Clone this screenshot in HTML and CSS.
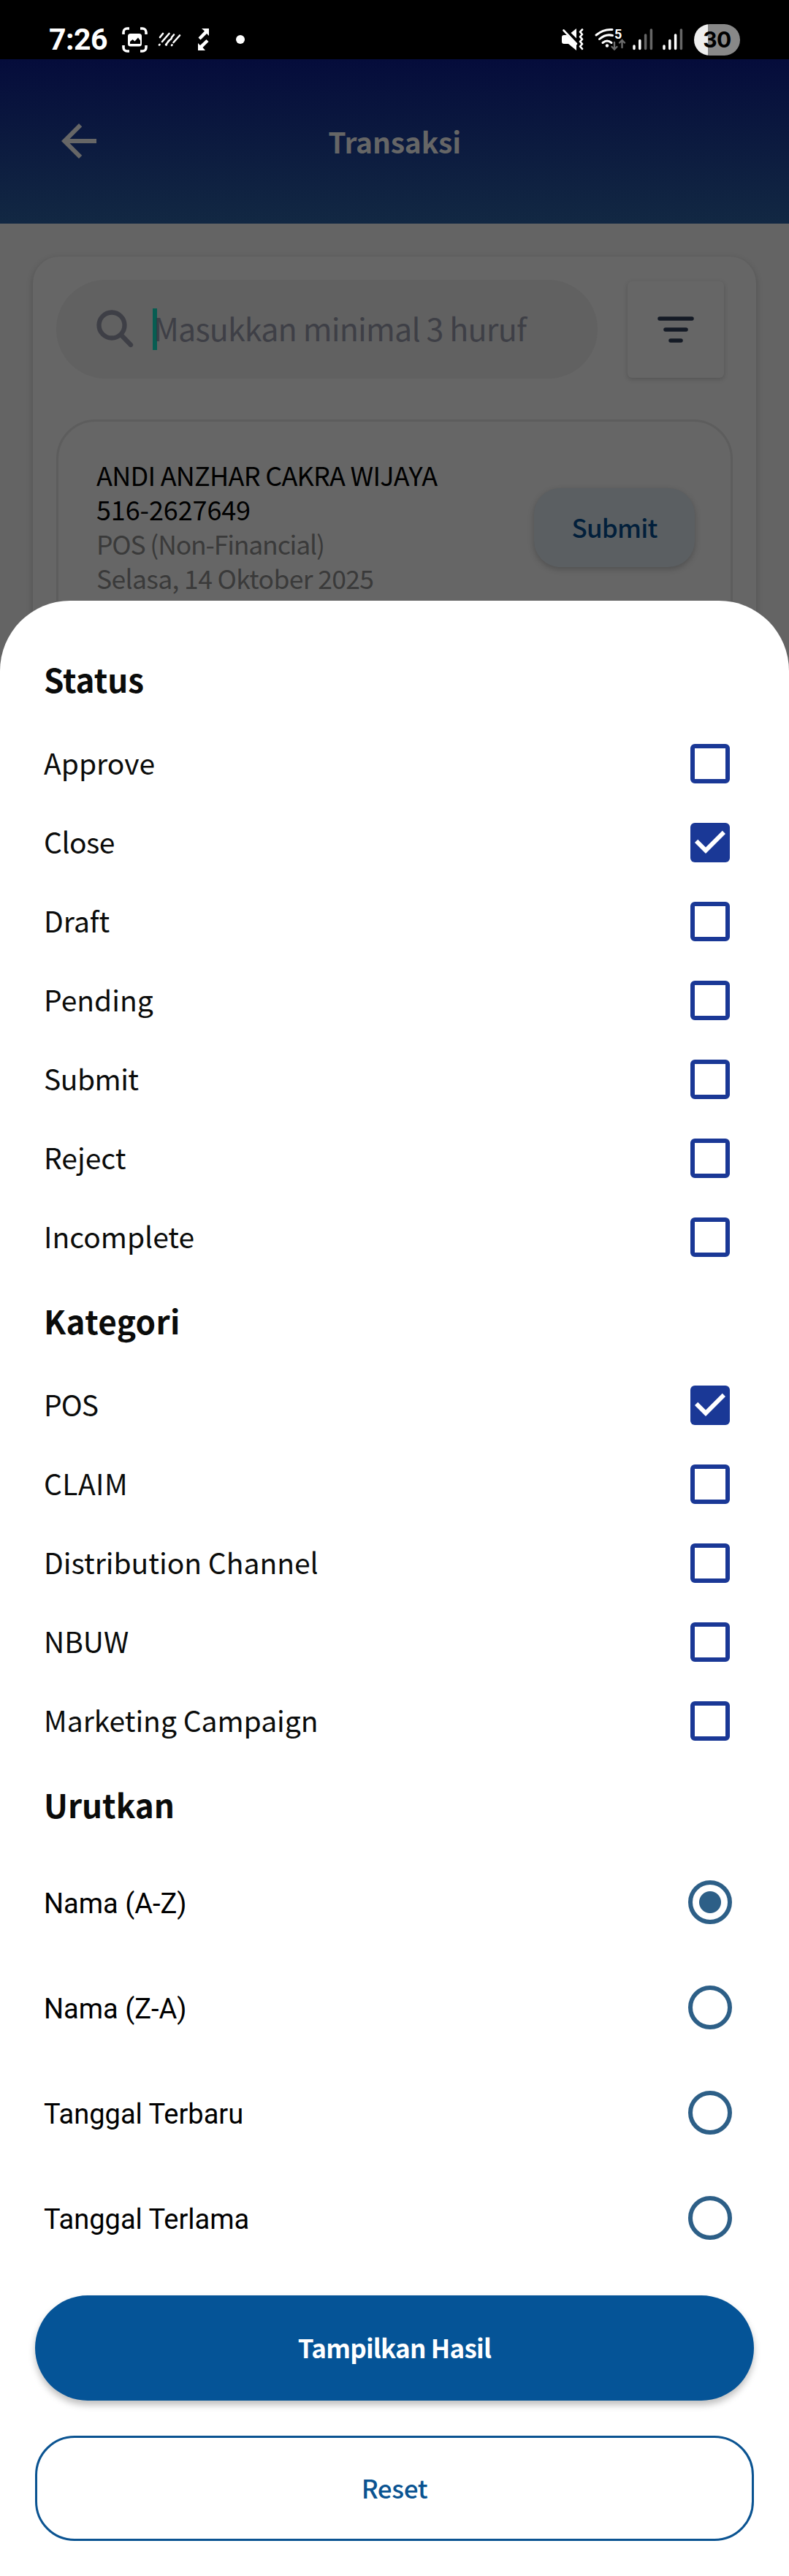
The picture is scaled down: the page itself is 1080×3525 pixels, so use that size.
FILE: index.html
```html
<!DOCTYPE html>
<html lang="id">
<head>
<meta charset="utf-8">
<title>Transaksi</title>
<link rel="stylesheet" href="styles.css">
</head>
<body>
<div class="app">
  <div class="statusbar">
    <div class="status-left">
      <span class="clock">7:26</span>
      <svg class="ic-shot" width="35" height="35" viewBox="0 0 35 35" fill="none" stroke="#fff" stroke-width="3.600"><path d="M2 10V7a5 5 0 0 1 5-5h3M25 2h3a5 5 0 0 1 5 5v3M33 25v3a5 5 0 0 1-5 5h-3M10 33H7a5 5 0 0 1-5-5v-3"/><rect x="8" y="9" width="19" height="17.500" rx="3.500" fill="#fff" stroke="none"/><path d="M11 23v-3l3.500-3 3 2.500 4.500-5 3 4v4.500z" fill="#000" stroke="none"/></svg>
      <svg class="ic-lines" width="32" height="20" viewBox="0 0 32 20" fill="none" stroke="#fff" stroke-width="2.600" stroke-linecap="round"><path d="M3 7l4-5M2 17.500l.5-.5M6 13L15.500 2M11 17l5-6M19 7l3-3.500M11.500 17.500l.5-.5M14 13l2-2M19 18l.5-.5M21.500 14L30 4.500M17.500 10L19 8"/></svg>
      <svg class="ic-arrows" width="15" height="30" viewBox="0 0 15 30" fill="#fff"><path d="M5 0h10v10l-3-3-8.500 8.500-3-3L9 3.500z"/><path d="M10 30H0V20l3 3 8.500-8 3 3-8 8z"/></svg>
      <span class="dot"></span>
    </div>
    <div class="status-right">
      <svg class="ic-mute" width="30" height="30" viewBox="0 0 30 30"><path d="M0 12q0-3 3-3h4l13 13v8L9 21H3q-3 0-3-3z" fill="#fff"/><path d="M12.500 6L20 0v13.500z" fill="#fff"/><path d="M2.500 2.500L20 21" stroke="#fff" stroke-width="2.600" stroke-linecap="round"/><path d="M28 1.500l-3 3.200 3 3.300-3 3.300 3 3.300-3 3.300 3 3.300-3 3.300 3 3.300" fill="none" stroke="#fff" stroke-width="2.600" stroke-linecap="round" stroke-linejoin="round"/></svg>
      <svg class="ic-wifi" width="43" height="32" viewBox="0 0 43 32" fill="none" stroke="#fff" stroke-width="3" stroke-linecap="round"><path d="M2 10Q12 1.500 24 2.500M6.500 15.500Q15 8 24.500 10.500M11 20.500q6-5 12 0"/><circle cx="17" cy="24.500" r="2.200" fill="#fff" stroke="none"/><path d="M27 20v9M23.500 26l3.500 3.500 3.500-3.500M37.500 27v-9M34 20.500l3.500-3.500 3.500 3.500" stroke="#6c6c6c" stroke-width="2.400"/><text x="27" y="15" class="wifi-gen">5</text></svg>
      <svg class="ic-sig" width="28" height="30" viewBox="0 0 28 30" stroke-width="3.500" stroke-linecap="round"><path d="M2 24v3.500M9.800 16.500v11" stroke="#fff"/><path d="M17.600 9v18.500M25.400 2v25.500" stroke="#666"/></svg>
      <svg class="ic-sig2" width="28" height="30" viewBox="0 0 28 30" stroke-width="3.500" stroke-linecap="round"><path d="M2 24v3.500M9.800 16.500v11M17.600 9v18.500" stroke="#fff"/><path d="M25.400 2v25.500" stroke="#666"/></svg>
      <span class="battery">30</span>
    </div>
  </div>
  <header class="header">
    <svg class="back" width="72" height="72" viewBox="0 0 24 24" fill="#666"><path d="M20 11H7.830l5.590-5.590L12 4l-8 8 8 8 1.410-1.410L7.830 13H20z"/></svg>
    <h1 class="title">Transaksi</h1>
  </header>
  <main class="content">
    <div class="card">
      <div class="tools">
        <div class="search">
          <svg width="54" height="56" viewBox="0 0 54 56" fill="none" stroke="#3e3f46" stroke-width="6.300" stroke-linecap="round"><circle cx="22" cy="22" r="17.500"/><path d="M35 35.500L48 49"/></svg>
          <span class="caret"></span>
          <span class="placeholder">Masukkan minimal 3 huruf</span>
        </div>
        <div class="filter"><svg width="50" height="36" viewBox="0 0 50 36" stroke="#141a25" stroke-width="5.500" stroke-linecap="round"><path d="M3 3h44M11 18h28M18 33h14"/></svg></div>
      </div>
      <div class="item">
        <div class="info">
          <div class="line name">ANDI ANZHAR CAKRA WIJAYA</div>
          <div class="line num">516-2627649</div>
          <div class="line muted kind">POS (Non-Financial)</div>
          <div class="line muted date">Selasa, 14 Oktober 2025</div>
        </div>
        <div class="badge">Submit</div>
      </div>
    </div>
  </main>
</div>
<section class="sheet">
  <h2 class="group first">Status</h2>
  <div class="row"><span class="label">Approve</span><span class="box"></span></div>
  <div class="row"><span class="label tight">Close</span><span class="box on"><svg width="54" height="54" viewBox="0 0 18 18" fill="#fff"><path d="M7 14L2 9l1.410-1.410L7 11.170l7.590-7.590L16 5z"/></svg></span></div>
  <div class="row"><span class="label">Draft</span><span class="box"></span></div>
  <div class="row"><span class="label">Pending</span><span class="box"></span></div>
  <div class="row"><span class="label tight">Submit</span><span class="box"></span></div>
  <div class="row"><span class="label">Reject</span><span class="box"></span></div>
  <div class="row"><span class="label">Incomplete</span><span class="box"></span></div>
  <h2 class="group wide">Kategori</h2>
  <div class="row"><span class="label tighter">POS</span><span class="box on"><svg width="54" height="54" viewBox="0 0 18 18" fill="#fff"><path d="M7 14L2 9l1.410-1.410L7 11.170l7.590-7.590L16 5z"/></svg></span></div>
  <div class="row"><span class="label wide">CLAIM</span><span class="box"></span></div>
  <div class="row"><span class="label">Distribution Channel</span><span class="box"></span></div>
  <div class="row"><span class="label">NBUW</span><span class="box"></span></div>
  <div class="row"><span class="label">Marketing Campaign</span><span class="box"></span></div>
  <h2 class="group">Urutkan</h2>
  <div class="row sort"><span class="label">Nama (A-Z)</span><span class="radio on"></span></div>
  <div class="row sort"><span class="label">Nama (Z-A)</span><span class="radio"></span></div>
  <div class="row sort"><span class="label">Tanggal Terbaru</span><span class="radio"></span></div>
  <div class="row sort"><span class="label">Tanggal Terlama</span><span class="radio"></span></div>
  <div class="actions">
    <div class="btn primary">Tampilkan Hasil</div>
    <div class="btn outline">Reset</div>
  </div>
</section>
</body>
</html>
```
FILE: styles.css
```css
* { box-sizing: border-box; }
body { margin: 0; width: 1080px; background: #fff; font-family: "Noto Sans CJK SC", "Noto Sans", sans-serif; }
svg { display: block; flex: none; }
.app { height: 925px; overflow: hidden; background: #646464; }

.statusbar { height: 81px; background: #000; color: #fff; display: flex; justify-content: space-between; padding: 0 67px; }
.status-left, .status-right { display: flex; align-items: center; height: 81px; padding-top: 27px; }
.clock { font: 700 41px/54px Roboto, sans-serif; letter-spacing: -.5px; width: 100px; }
.ic-lines { margin-left: 14px; }
.ic-arrows { margin-left: 23px; }
.dot { width: 12px; height: 12px; border-radius: 50%; background: #fff; margin-left: 37px; }
.ic-wifi { margin-left: 15px; overflow: visible; }
.wifi-gen { font: 700 18px Roboto, sans-serif; fill: #fff; stroke: none; }
.ic-sig { margin-left: 9px; }
.ic-sig2 { margin-left: 13px; }
.battery { width: 63px; height: 43px; margin-left: 15px; border-radius: 22px; background: linear-gradient(90deg, #eee 19px, #888 19px); color: #000; font: 700 30px/42px Inter, sans-serif; letter-spacing: -.5px; text-align: center; }

.header { height: 225px; background: linear-gradient(#050c3b, #122843); display: grid; grid-template-columns: 72px 1fr 72px; padding: 76px 72px 0; }
.title { margin: 0; padding-top: 8px; text-align: center; color: #666; font-size: 39px; line-height: 56px; font-weight: 700; letter-spacing: -.2px; }

.content { padding: 45px 45px 0; }
.card { height: 700px; border-radius: 36px; background: #666; box-shadow: 0 3px 10px rgba(0,0,0,.2); padding: 32px 32px 0; }
.tools { display: flex; justify-content: space-between; padding-right: 12px; }
.search { width: 741px; height: 135px; border-radius: 68px; background: #616161; display: flex; align-items: center; padding-left: 54px; }
.caret { width: 6px; height: 57px; background: #075d52; margin-left: 24px; }
.placeholder { color: #3e3f46; font-size: 43px; line-height: 60px; letter-spacing: -.85px; margin-left: -5px; padding-bottom: 5px; }
.filter { width: 132px; height: 132px; margin-top: 2px; border-radius: 6px; background: #666; box-shadow: 0 2px 6px rgba(0,0,0,.18); display: flex; align-items: center; justify-content: center; }
.item { margin-top: 56px; width: 926px; height: 500px; border: 3px solid #5d5d5d; border-radius: 54px; display: flex; justify-content: space-between; padding: 49px 49px 0 52px; }
.line { font-size: 36px; line-height: 47px; color: #000; white-space: nowrap; }
.name { letter-spacing: -.73px; }
.num { letter-spacing: -.12px; }
.line.muted { color: #3a3a3a; font-size: 35.500px; }
.kind { letter-spacing: -1.150px; }
.date { letter-spacing: -.65px; }
.badge { width: 220px; height: 108px; margin-top: 42px; border-radius: 36px; background: #5b5f62; color: #021f3b; font-size: 35px; font-weight: 500; letter-spacing: -.8px; line-height: 105px; text-align: center; box-shadow: 0 3px 8px rgba(0,0,0,.22); }

.sheet { position: relative; margin-top: -103px; height: 2703px; border-radius: 96px 96px 0 0; background: #fff; padding: 63px 0 0; color: #0a0b0a; }
.group { margin: 0; padding: 16px 0 0 60px; height: 122px; font-size: 44px; line-height: 88px; font-weight: 700; }
.group.first { padding-top: 0; height: 106px; }
.row { height: 108px; display: flex; align-items: center; justify-content: space-between; padding: 0 81px 0 60px; }
.label { font-size: 39px; line-height: 56px; padding-bottom: 4px; }
.tight { letter-spacing: -.5px; }
.tighter { letter-spacing: -1px; }
.wide { letter-spacing: .4px; }
.box { width: 54px; height: 54px; border: 6px solid #1a3896; border-radius: 6px; }
.box.on { border: 0; background: #1a3896; }
.row.sort { height: 144px; padding-right: 78px; }
.sort .label { font: 38px/56px Roboto, sans-serif; color: #000; padding: 4px 0 0; }
.radio { width: 60px; height: 60px; border: 6px solid #2d5f87; border-radius: 50%; }
.radio.on { background: radial-gradient(circle, #2d5f87 14.500px, #fff 15.500px); }
.actions { padding: 0 48px; margin-top: 34px; display: flex; flex-direction: column; gap: 48px; }
.btn { height: 144px; display: flex; align-items: center; justify-content: center; font-size: 35px; font-weight: 500; letter-spacing: -.35px; padding-bottom: 4px; }
.primary { border-radius: 72px; background: #055497; color: #fff; font-weight: 700; letter-spacing: -.75px; box-shadow: 0 6px 10px rgba(0,0,0,.25); }
.outline { border-radius: 54px; border: 3px solid #0a5391; color: #0a5391; }
```
